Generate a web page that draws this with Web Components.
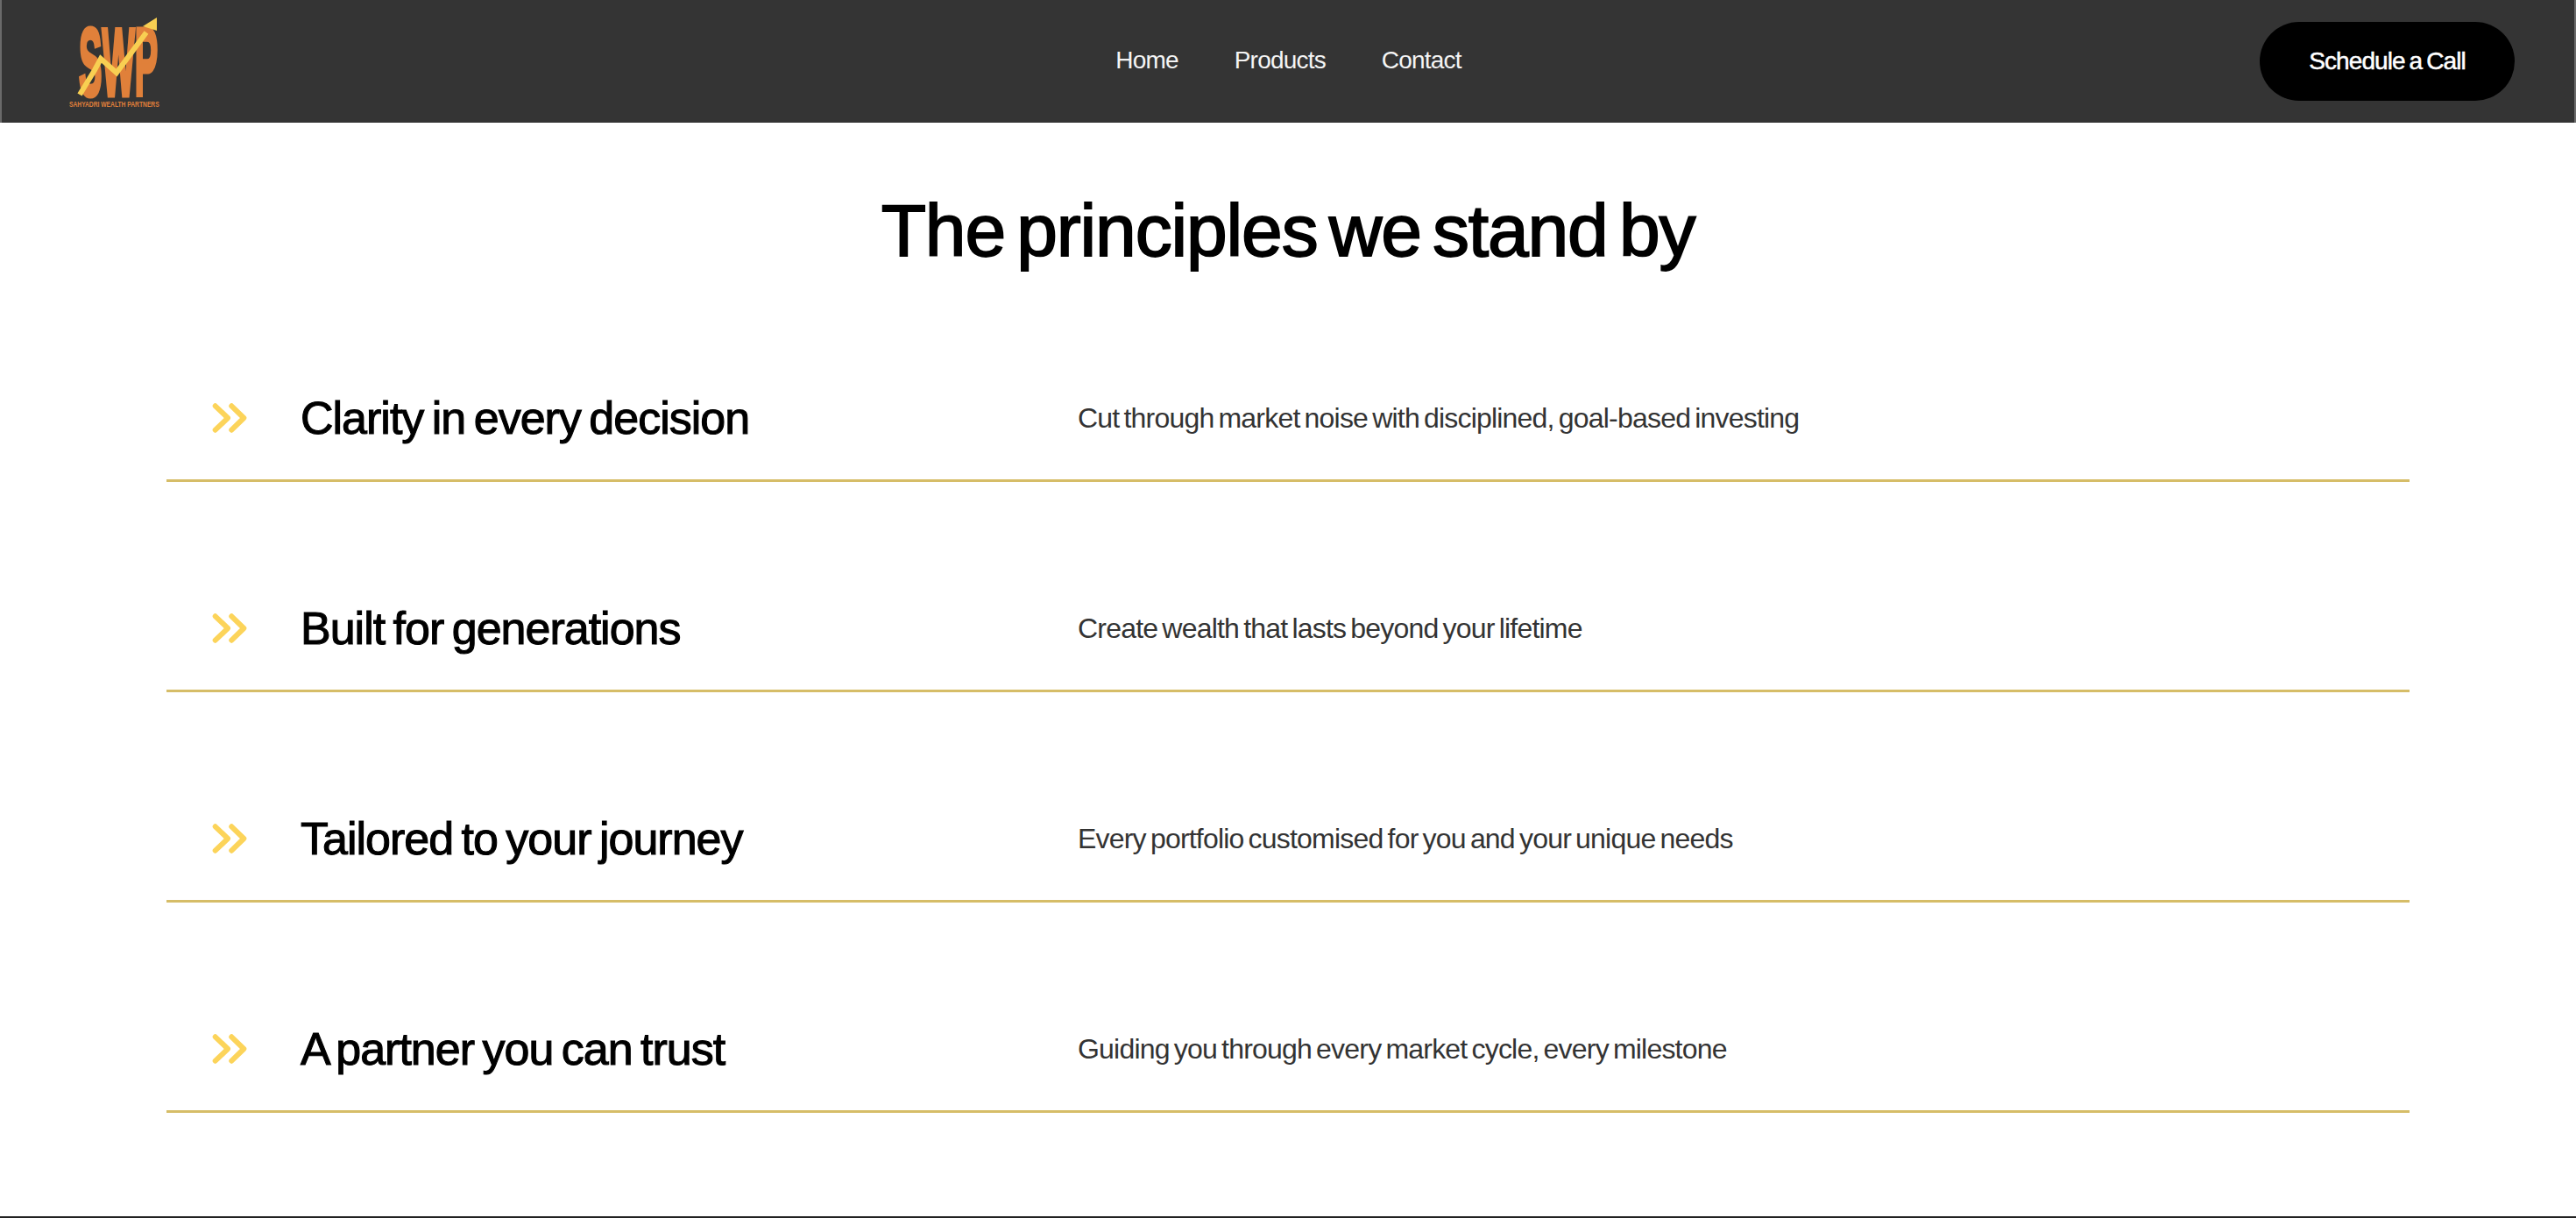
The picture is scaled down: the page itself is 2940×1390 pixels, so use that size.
<!DOCTYPE html>
<html lang="en">
<head>
<meta charset="utf-8">
<title>Sahyadri Wealth Partners</title>
<style>
    html, body { margin: 0; padding: 0; background: white; }
    body { font-family: "Liberation Sans", Arial, sans-serif; height: 1390px; overflow: hidden; }
</style>
</head>
<body>
<swp-page>
    <swp-header></swp-header>
    <swp-principles heading="The principles we stand by">
        <swp-principle title-text="Clarity in every decision" text="Cut through market noise with disciplined, goal-based investing"></swp-principle>
        <swp-principle title-text="Built for generations" text="Create wealth that lasts beyond your lifetime"></swp-principle>
        <swp-principle title-text="Tailored to your journey" text="Every portfolio customised for you and your unique needs"></swp-principle>
        <swp-principle title-text="A partner you can trust" text="Guiding you through every market cycle, every milestone"></swp-principle>
    </swp-principles>
</swp-page>

<script>
class SwpPage extends HTMLElement {
    constructor(){
        super();
        this.attachShadow({mode:'open'});
        this.shadowRoot.innerHTML = `
        <style>
            :host { display: flex; flex-direction: column; height: 1390px; box-sizing: border-box; border-bottom: 2px solid #222; }
        </style>
        <slot></slot>`;
    }
}

class SwpHeader extends HTMLElement {
    constructor(){
        super();
        this.attachShadow({mode:'open'});
        this.shadowRoot.innerHTML = `
        <style>
            :host {
                display: grid;
                grid-template-columns: 1fr auto 1fr;
                align-items: center;
                height: 140px;
                box-sizing: border-box;
                background-color: #343434;
                border-left: 2px solid #6a6a6a;
                border-right: 2px solid #6a6a6a;
                padding: 0 68px 0 58px;
            }
            svg { display: block; overflow: visible; }
            nav { display: flex; gap: 64px; margin-top: -2px; margin-left: 11px; }
            nav a { color: #f4f4f4; font-size: 28px; letter-spacing: -0.8px; text-decoration: none; }
            .cta {
                justify-self: end;
                display: flex; align-items: center; justify-content: center;
                width: 291px; height: 90px; margin-top: -1px;
                background: black; color: white; border-radius: 45px;
                font-size: 28px; letter-spacing: -0.9px; word-spacing: -2px;
                -webkit-text-stroke: 0.5px white;
            }
        </style>
        <svg width="130" height="140" viewBox="0 0 130 140" role="img" aria-label="SWP logo">
            <g fill="#e0803a" font-family="'Liberation Sans', sans-serif" font-weight="700">
                <text transform="translate(30 109) scale(.36 1)" font-size="110" stroke="#e0803a" stroke-width="5">SWP</text>
                <text transform="translate(19 122) scale(.7 1)" font-size="9.6">SAHYADRI WEALTH PARTNERS</text>
            </g>
            <path d="M31 108 L48 80 L55 67 L73 83 L107 37" fill="none" stroke="#f8cf52" stroke-width="6"/>
            <path d="M103 30 L119 20 L119 35 Z" fill="#f8cf52"/>
        </svg>
        <nav><a href="#">Home</a><a href="#">Products</a><a href="#">Contact</a></nav>
        <div class="cta">Schedule a Call</div>`;
    }
}

class SwpPrinciples extends HTMLElement {
    constructor(){
        super();
        this.attachShadow({mode:'open'});
        this.shadowRoot.innerHTML = `
        <style>
            :host { display: block; padding: 0 190px; }
            h1 {
                margin: 0; padding-top: 72px; height: 102px;
                text-align: center; color: black;
                font-size: 84px; line-height: 102px; font-weight: 400; letter-spacing: -1.15px; word-spacing: -9px;
                -webkit-text-stroke: 1.8px black;
            }
            .rows { display: flex; flex-direction: column; gap: 97px; margin-top: 93px; }
        </style>
        <h1></h1>
        <div class="rows"><slot></slot></div>`;
    }
    connectedCallback(){
        this.shadowRoot.querySelector("h1").textContent = this.getAttribute("heading");
    }
}

class SwpPrinciple extends HTMLElement {
    constructor(){
        super();
        this.attachShadow({mode:'open'});
        this.shadowRoot.innerHTML = `
        <style>
            :host {
                display: grid;
                grid-template-columns: 153px 887px 1fr;
                align-items: center;
                height: 143px;
                box-sizing: border-box;
                border-bottom: 3px solid #d6bd68;
            }
            svg { display: block; margin-left: 51px; }
            h2 { margin: 0; color: black; font-size: 52px; font-weight: 400; letter-spacing: -1px; word-spacing: -4px; white-space: nowrap; -webkit-text-stroke: 1.1px black; }
            p { margin: 0; color: #333; font-size: 32px; letter-spacing: -0.8px; word-spacing: -3px; white-space: nowrap; }
        </style>
        <svg width="42" height="38" viewBox="0 0 42 38" fill="none" stroke="#fcd45a" stroke-width="6" stroke-linecap="round" stroke-linejoin="round">
            <path d="M4.7 5.3 L19 19 L4.7 32.7"/><path d="M23.3 5.3 L37.3 19 L23.3 32.7"/>
        </svg>
        <h2></h2>
        <p></p>`;
    }
    connectedCallback(){
        this.shadowRoot.querySelector("h2").textContent = this.getAttribute("title-text");
        this.shadowRoot.querySelector("p").textContent = this.getAttribute("text");
    }
}

window.customElements.define('swp-page', SwpPage);
window.customElements.define('swp-header', SwpHeader);
window.customElements.define('swp-principles', SwpPrinciples);
window.customElements.define('swp-principle', SwpPrinciple);
</script>
</body>
</html>
